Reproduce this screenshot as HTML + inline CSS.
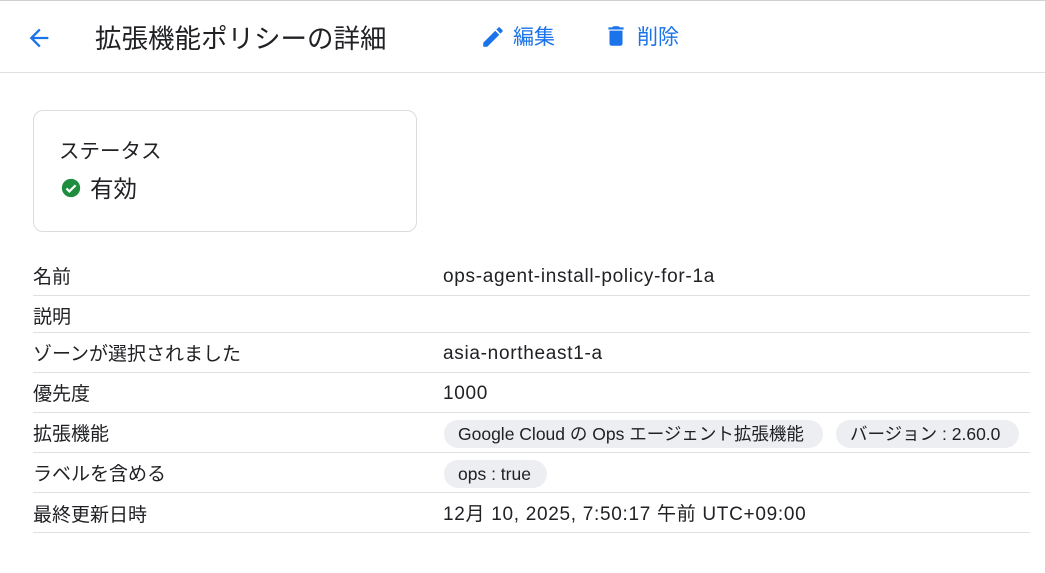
<!DOCTYPE html>
<html><head><meta charset="utf-8"><style>
body{margin:0;width:1045px;height:573px;background:#fff;font-family:"Liberation Sans","Noto Sans CJK JP",sans-serif;color:#202124;position:relative;overflow:hidden}
.top{position:absolute;left:0;top:0;width:1045px;height:1px;background:#d0d0d0}
.hdr{position:absolute;left:0;top:72px;width:1045px;height:1px;background:#e0e0e0}
.abs{position:absolute;white-space:nowrap}
.t{position:absolute;white-space:nowrap;font-size:19px;line-height:24px;height:24px}
.card{position:absolute;left:33px;top:110px;width:382px;height:120px;border:1px solid #dadce0;border-radius:10px}
.ln{position:absolute;left:33px;width:997px;height:1px;background:#e0e0e0}
.v{letter-spacing:0.7px}
.chip{position:absolute;background:#eceef1;border-radius:14px;height:28px;line-height:28px;padding:0 14px;font-size:17.5px;white-space:nowrap;box-sizing:border-box}
</style></head><body>
<div class="top"></div>
<svg class="abs" style="left:25px;top:24px" width="28" height="28" viewBox="0 0 24 24"><path d="M20 11H7.8l5.6-5.6L12 4l-8 8 8 8 1.4-1.4L7.8 13H20z" fill="#1a73e8"/></svg>
<div class="abs" style="left:95px;top:22px;font-size:26.5px;line-height:34px">拡張機能ポリシーの詳細</div>
<svg class="abs" style="left:480px;top:24px" width="26" height="26" viewBox="0 0 24 24"><path d="M3 17.25V21h3.75L17.8 9.94l-3.75-3.75L3 17.25zM20.7 7.04a1 1 0 0 0 0-1.41l-2.34-2.34a1 1 0 0 0-1.41 0l-1.83 1.83 3.75 3.75 1.83-1.83z" fill="#1a73e8"/></svg>
<div class="abs" style="left:513px;top:24px;font-size:21px;line-height:28px;color:#1a73e8">編集</div>
<svg class="abs" style="left:603px;top:23px" width="26" height="26" viewBox="0 0 24 24"><path d="M6 19c0 1.1.9 2 2 2h8c1.1 0 2-.9 2-2V7H6v12zM19 4h-3.5l-1-1h-5l-1 1H5v2h14V4z" fill="#1a73e8"/></svg>
<div class="abs" style="left:637px;top:24px;font-size:21px;line-height:28px;color:#1a73e8">削除</div>
<div class="hdr"></div>
<div class="card"></div>
<div class="abs" style="left:59px;top:138px;font-size:20.5px;line-height:28px">ステータス</div>
<svg class="abs" style="left:60px;top:177px" width="22" height="22" viewBox="0 0 24 24"><circle cx="12" cy="12" r="10" fill="#1e8e3e"/><path d="M7 12.5l3.2 3.2L17 9" stroke="#fff" stroke-width="2.4" fill="none"/></svg>
<div class="abs" style="left:90px;top:173px;font-size:23.5px;line-height:32px">有効</div>

<div class="t" style="left:33px;top:266px">名前</div>
<div class="t v" style="left:443px;top:265px">ops-agent-install-policy-for-1a</div>
<div class="ln" style="top:295px"></div>
<div class="t" style="left:33px;top:306px">説明</div>
<div class="ln" style="top:332px"></div>
<div class="t" style="left:33px;top:343px">ゾーンが選択されました</div>
<div class="t v" style="left:443px;top:342px">asia-northeast1-a</div>
<div class="ln" style="top:372px"></div>
<div class="t" style="left:33px;top:383px">優先度</div>
<div class="t v" style="left:443px;top:382px">1000</div>
<div class="ln" style="top:412px"></div>
<div class="t" style="left:33px;top:423px">拡張機能</div>
<div class="chip" style="left:444px;top:420px;width:379px">Google Cloud の Ops エージェント拡張機能</div>
<div class="chip" style="left:836px;top:420px;width:183px">バージョン : 2.60.0</div>
<div class="ln" style="top:452px"></div>
<div class="t" style="left:33px;top:463px">ラベルを含める</div>
<div class="chip" style="left:444px;top:460px;width:103px">ops : true</div>
<div class="ln" style="top:492px"></div>
<div class="t" style="left:33px;top:504px">最終更新日時</div>
<div class="t v" style="left:443px;top:503px">12月 10, 2025, 7:50:17 午前 UTC+09:00</div>
<div class="ln" style="top:532px"></div>
</body></html>
